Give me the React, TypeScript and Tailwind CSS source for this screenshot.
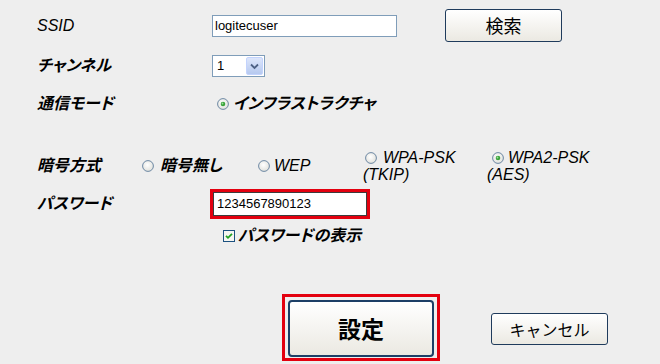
import React from "react"

// ─── Windows XP style controls ────────────────────────────────────────────────

function Radio({ checked = false }: { checked?: boolean }) {
  return (
    <svg width="12" height="12" viewBox="0 0 12 12" className="shrink-0">
      <defs>
        <radialGradient id="rb" cx="0.45" cy="0.4" r="0.7">
          <stop offset="0" stopColor="#ffffff" />
          <stop offset="1" stopColor="#dcdcd6" />
        </radialGradient>
      </defs>
      <circle cx="6" cy="6" r="5.4" fill="url(#rb)" stroke="#5f7d9c" strokeWidth="0.9" />
      {checked && <circle cx="6" cy="6" r="2.3" fill="#3aa23a" />}
      {checked && <circle cx="5.5" cy="5.5" r="0.9" fill="#9be09b" />}
    </svg>
  )
}

function Checkbox() {
  return (
    <svg width="12" height="12" viewBox="0 0 12 12" className="shrink-0">
      <rect x="0.5" y="0.5" width="11" height="11" fill="#f6f6f2" stroke="#1c5180" />
      <path d="M3 5.8 L5 7.8 L9 3.8" fill="none" stroke="#21a121" strokeWidth="1.8" />
    </svg>
  )
}

function Select() {
  return (
    <div className="ml-[2px] flex h-[22px] w-[53px] items-center border border-[#7f9db9] bg-white">
      <span className="flex-1 pl-[4px] text-[13px] text-black">1</span>
      <div className="mr-[1px] flex h-[18px] w-[17px] items-center justify-center rounded-[2px] border border-[#c3d3fd] bg-linear-to-b from-[#dde6fb] to-[#b6c9ef]">
        <svg width="9" height="7" viewBox="0 0 9 7">
          <path d="M1 1.5 L4.5 5 L8 1.5" fill="none" stroke="#4d6185" strokeWidth="1.8" />
        </svg>
      </div>
    </div>
  )
}

const jp = "font-bold italic [font-feature-settings:'palt']"

export default function App() {
  return (
    <div className="h-[364px] w-[660px] overflow-hidden bg-[#eeeeee] pl-[37px] font-['Liberation_Sans','Noto_Sans_CJK_JP',sans-serif] text-black">
      {/* SSID */}
      <div className="mt-[9px] flex h-[33px] items-center">
        <div className="w-[173px] text-[16px] italic">SSID</div>
        <div className="ml-[2px] flex h-[22px] w-[185px] items-center border border-[#7f9db9] bg-white pl-[2px] text-[13px]">
          logitecuser
        </div>
        <button className="ml-[48px] flex h-[33px] w-[117px] items-center justify-center rounded-[3px] border border-[#1f3b5c] bg-linear-to-b from-white to-[#ebe9e2] text-[18px] font-['Noto_Sans_CJK_JP',sans-serif] font-normal">
          検索
        </button>
      </div>

      {/* Channel */}
      <div className="mt-[13px] flex h-[22px] items-center">
        <div className={`w-[173px] text-[16px] ${jp}`}>チャンネル</div>
        <Select />
      </div>

      {/* Mode */}
      <div className="mt-[15px] flex h-[24px] items-center">
        <div className={`w-[173px] text-[16px] ${jp}`}>通信モード</div>
        <div className="ml-[7px] flex items-center gap-[4px]">
          <Radio checked />
          <span className={`text-[16px] ${jp}`}>インフラストラクチャ</span>
        </div>
      </div>

      {/* Encryption */}
      <div className="mt-[31px] flex h-[38px] items-center">
        <div className={`w-[105px] text-[16px] ${jp}`}>暗号方式</div>
        <div className="flex w-[116px] items-center gap-[6px]">
          <Radio />
          <span className={`text-[16px] ${jp}`}>暗号無し</span>
        </div>
        <div className="flex w-[105px] items-center gap-[4px]">
          <Radio />
          <span className="text-[16px] italic">WEP</span>
        </div>
        <div className="w-[124px] text-[16px] leading-[17px] italic">
          <div className="ml-[2px] flex items-center gap-[6px]">
            <Radio />
            <span>WPA-PSK</span>
          </div>
          <div>(TKIP)</div>
        </div>
        <div className="text-[16px] leading-[17px] italic">
          <div className="ml-[5px] flex items-center gap-[4px]">
            <Radio checked />
            <span>WPA2-PSK</span>
          </div>
          <div>(AES)</div>
        </div>
      </div>

      {/* Password */}
      <div className="mt-[4px] flex h-[30px] items-center">
        <div className={`w-[173px] text-[16px] ${jp}`}>パスワード</div>
        <div className="border-[3px] border-[#e3000f] p-[0px]">
          <div className="flex h-[24px] w-[154px] items-center border border-[#3c3c3c] bg-white pl-[3px] text-[13px]">
            1234567890123
          </div>
        </div>
      </div>

      {/* Show password */}
      <div className="mt-[7px] flex h-[20px] items-center">
        <div className="ml-[186px] flex items-center gap-[3px]">
          <Checkbox />
          <span className={`text-[16px] ${jp}`}>パスワードの表示</span>
        </div>
      </div>

      {/* Actions */}
      <div className="mt-[48px] flex items-start">
        <div className="ml-[245px] border-[3px] border-[#e3000f] px-[3px] pt-[3px] pb-[1px]">
          <button className="flex h-[57px] w-[146px] items-center justify-center rounded-[4px] border-2 border-[#1c3f66] bg-linear-to-b from-white to-[#ebe9e2] font-['Noto_Sans_CJK_JP',sans-serif] text-[23px] font-bold">
            設定
          </button>
        </div>
        <button className="ml-[51px] mt-[19px] flex h-[32px] w-[117px] items-center justify-center rounded-[3px] border border-[#1f3b5c] bg-linear-to-b from-white to-[#ebe9e2] font-['Noto_Sans_CJK_JP',sans-serif] text-[16px] font-normal">
          キャンセル
        </button>
      </div>
    </div>
  )
}
